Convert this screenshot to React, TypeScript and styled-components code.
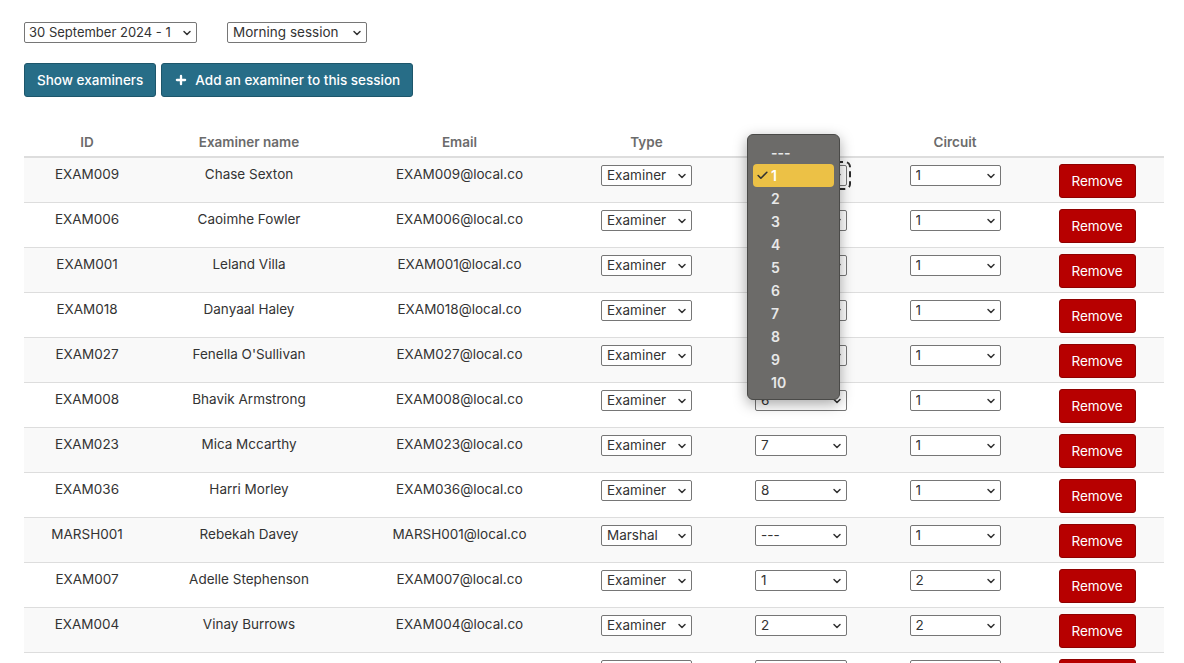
import styled, { createGlobalStyle } from "styled-components";
import { ChevronDown, Plus, Check } from "lucide-react";

const GlobalStyles = createGlobalStyle`
  *, *::before, *::after {
    box-sizing: border-box;
  }
  body {
    margin: 0;
    background: #fff;
    font-family: "Inter", "Liberation Sans", sans-serif;
    font-size: 13.5px;
    color: #333;
  }
`;

type Examiner = {
  id: string;
  name: string;
  type: string;
  station: string;
  circuit: string;
};

const examiners: Examiner[] = [
  { id: "EXAM009", name: "Chase Sexton", type: "Examiner", station: "1", circuit: "1" },
  { id: "EXAM006", name: "Caoimhe Fowler", type: "Examiner", station: "2", circuit: "1" },
  { id: "EXAM001", name: "Leland Villa", type: "Examiner", station: "3", circuit: "1" },
  { id: "EXAM018", name: "Danyaal Haley", type: "Examiner", station: "4", circuit: "1" },
  { id: "EXAM027", name: "Fenella O'Sullivan", type: "Examiner", station: "5", circuit: "1" },
  { id: "EXAM008", name: "Bhavik Armstrong", type: "Examiner", station: "6", circuit: "1" },
  { id: "EXAM023", name: "Mica Mccarthy", type: "Examiner", station: "7", circuit: "1" },
  { id: "EXAM036", name: "Harri Morley", type: "Examiner", station: "8", circuit: "1" },
  { id: "MARSH001", name: "Rebekah Davey", type: "Marshal", station: "---", circuit: "1" },
  { id: "EXAM007", name: "Adelle Stephenson", type: "Examiner", station: "1", circuit: "2" },
  { id: "EXAM004", name: "Vinay Burrows", type: "Examiner", station: "2", circuit: "2" },
  { id: "EXAM012", name: "Orla Jennings", type: "Examiner", station: "3", circuit: "2" },
  { id: "EXAM015", name: "Tobias Quinn", type: "Examiner", station: "4", circuit: "2" },
];

const stationOptions = ["---", "1", "2", "3", "4", "5", "6", "7", "8", "9", "10"];

const Page = styled.div`
  padding: 22px 20px 0 24px;
`;

const Filters = styled.div`
  display: flex;
  gap: 30px;
`;

const SelectWrap = styled.span<{ $width: number }>`
  position: relative;
  display: inline-block;
  width: ${(p) => p.$width}px;
  height: 21px;
  vertical-align: top;

  svg {
    position: absolute;
    right: 4px;
    top: 5px;
    pointer-events: none;
    color: #333;
  }
`;

const Select = styled.select<{ $focused?: boolean; $tight?: boolean }>`
  appearance: none;
  -webkit-appearance: none;
  width: 100%;
  height: 21px;
  margin: 0;
  padding: ${(p) => (p.$tight ? "0 14px 0 4px" : "0 18px 0 5px")};
  border: 1px solid #767676;
  border-radius: 2px;
  background: #fff;
  font-family: inherit;
  font-size: ${(p) => (p.$tight ? "13px" : "13.5px")};
  line-height: 19px;
  color: #333;
  text-overflow: clip;
  outline: ${(p) => (p.$focused ? "2px dashed #2a2a2a" : "none")};
  outline-offset: 2px;
`;

const Actions = styled.div`
  display: flex;
  gap: 5px;
  margin-top: 20px;
`;

const Button = styled.button`
  display: inline-flex;
  align-items: center;
  gap: 7px;
  height: 34px;
  padding: 0 12px;
  border: 1px solid #1d566b;
  border-radius: 3px;
  background: #276d87;
  color: #fff;
  font-family: inherit;
  font-size: 13.5px;
  font-weight: 500;
  cursor: pointer;
`;

const Table = styled.table`
  margin-top: 33px;
  width: 1140px;
  border-collapse: collapse;
  table-layout: fixed;
`;

const Th = styled.th<{ $width: number }>`
  width: ${(p) => p.$width}px;
  padding: 2px 6px 4px;
  border-bottom: 2px solid #ddd;
  font-size: 13.5px;
  font-weight: 600;
  line-height: 20px;
  color: #6b6b6b;
  text-align: center;
`;

const Row = styled.tr`
  border-top: 1px solid #ddd;
  &:nth-child(odd) {
    background: #f9f9f9;
  }
`;

const Td = styled.td`
  position: relative;
  height: 45px;
  padding: 6px 6px 0;
  vertical-align: top;
  text-align: center;
  line-height: 20px;
  color: #333;
`;

const CellSelect = styled.div`
  padding-top: 1px;
`;

const RemoveButton = styled.button`
  height: 34px;
  width: 77px;
  border: 1px solid #8f0000;
  border-radius: 3px;
  background: #b70000;
  color: #fff;
  font-family: inherit;
  font-size: 13.5px;
  cursor: pointer;
`;

const Menu = styled.div`
  position: absolute;
  left: -8px;
  top: -31px;
  z-index: 5;
  width: 93px;
  padding: 6px 5px 5px;
  background: #6c6b69;
  border: 1px solid #4a4a48;
  border-radius: 6px;
  box-shadow: 0 4px 14px rgba(0, 0, 0, 0.35);
  text-align: left;
`;

const MenuItem = styled.div<{ $active?: boolean }>`
  position: relative;
  height: 23px;
  padding-left: 18px;
  border-radius: 4px;
  background: ${(p) => (p.$active ? "#ecc146" : "transparent")};
  color: ${(p) => (p.$active ? "#fff" : "#e8e8e8")};
  font-size: 14px;
  font-weight: 600;
  line-height: 23px;

  svg {
    position: absolute;
    left: 3px;
    top: 5px;
  }
`;

function Dropdown({
  width,
  value,
  options,
  focused,
  tight,
  children,
}: {
  width: number;
  value: string;
  options: string[];
  focused?: boolean;
  tight?: boolean;
  children?: React.ReactNode;
}) {
  return (
    <SelectWrap $width={width}>
      <Select defaultValue={value} $focused={focused} $tight={tight}>
        {options.map((o) => (
          <option key={o}>{o}</option>
        ))}
      </Select>
      <ChevronDown size={12} strokeWidth={3} />
      {children}
    </SelectWrap>
  );
}

function App() {
  return (
    <>
      <GlobalStyles />
      <Page>
        <Filters>
          <Dropdown
            width={173}
            value="30 September 2024 - 1"
            options={["30 September 2024 - 1", "30 September 2024 - 2"]}
            tight
          />
          <Dropdown
            width={140}
            value="Morning session"
            options={["Morning session", "Afternoon session"]}
          />
        </Filters>
        <Actions>
          <Button>Show examiners</Button>
          <Button>
            <Plus size={14} strokeWidth={4} />
            Add an examiner to this session
          </Button>
        </Actions>
        <Table>
          <thead>
            <tr>
              <Th $width={126}>ID</Th>
              <Th $width={198}>Examiner name</Th>
              <Th $width={223}>Email</Th>
              <Th $width={151}>Type</Th>
              <Th $width={158}>Station</Th>
              <Th $width={150}>Circuit</Th>
              <Th $width={134}></Th>
            </tr>
          </thead>
          <tbody>
            {examiners.map((ex, i) => (
              <Row key={ex.id}>
                <Td>{ex.id}</Td>
                <Td>{ex.name}</Td>
                <Td>{ex.id}@local.co</Td>
                <Td>
                  <CellSelect>
                    <Dropdown
                      width={91}
                      value={ex.type}
                      options={["Examiner", "Marshal"]}
                    />
                  </CellSelect>
                </Td>
                <Td>
                  <CellSelect>
                    <Dropdown
                      width={92}
                      value={ex.station}
                      options={stationOptions}
                      focused={i === 0}
                    >
                      {i === 0 && (
                        <Menu>
                          {stationOptions.map((o) => (
                            <MenuItem key={o} $active={o === ex.station}>
                              {o === ex.station && (
                                <Check size={13} strokeWidth={3} />
                              )}
                              {o}
                            </MenuItem>
                          ))}
                        </Menu>
                      )}
                    </Dropdown>
                  </CellSelect>
                </Td>
                <Td>
                  <CellSelect>
                    <Dropdown
                      width={91}
                      value={ex.circuit}
                      options={["1", "2", "3"]}
                    />
                  </CellSelect>
                </Td>
                <Td>
                  <RemoveButton>Remove</RemoveButton>
                </Td>
              </Row>
            ))}
          </tbody>
        </Table>
      </Page>
    </>
  );
}

export default App;
